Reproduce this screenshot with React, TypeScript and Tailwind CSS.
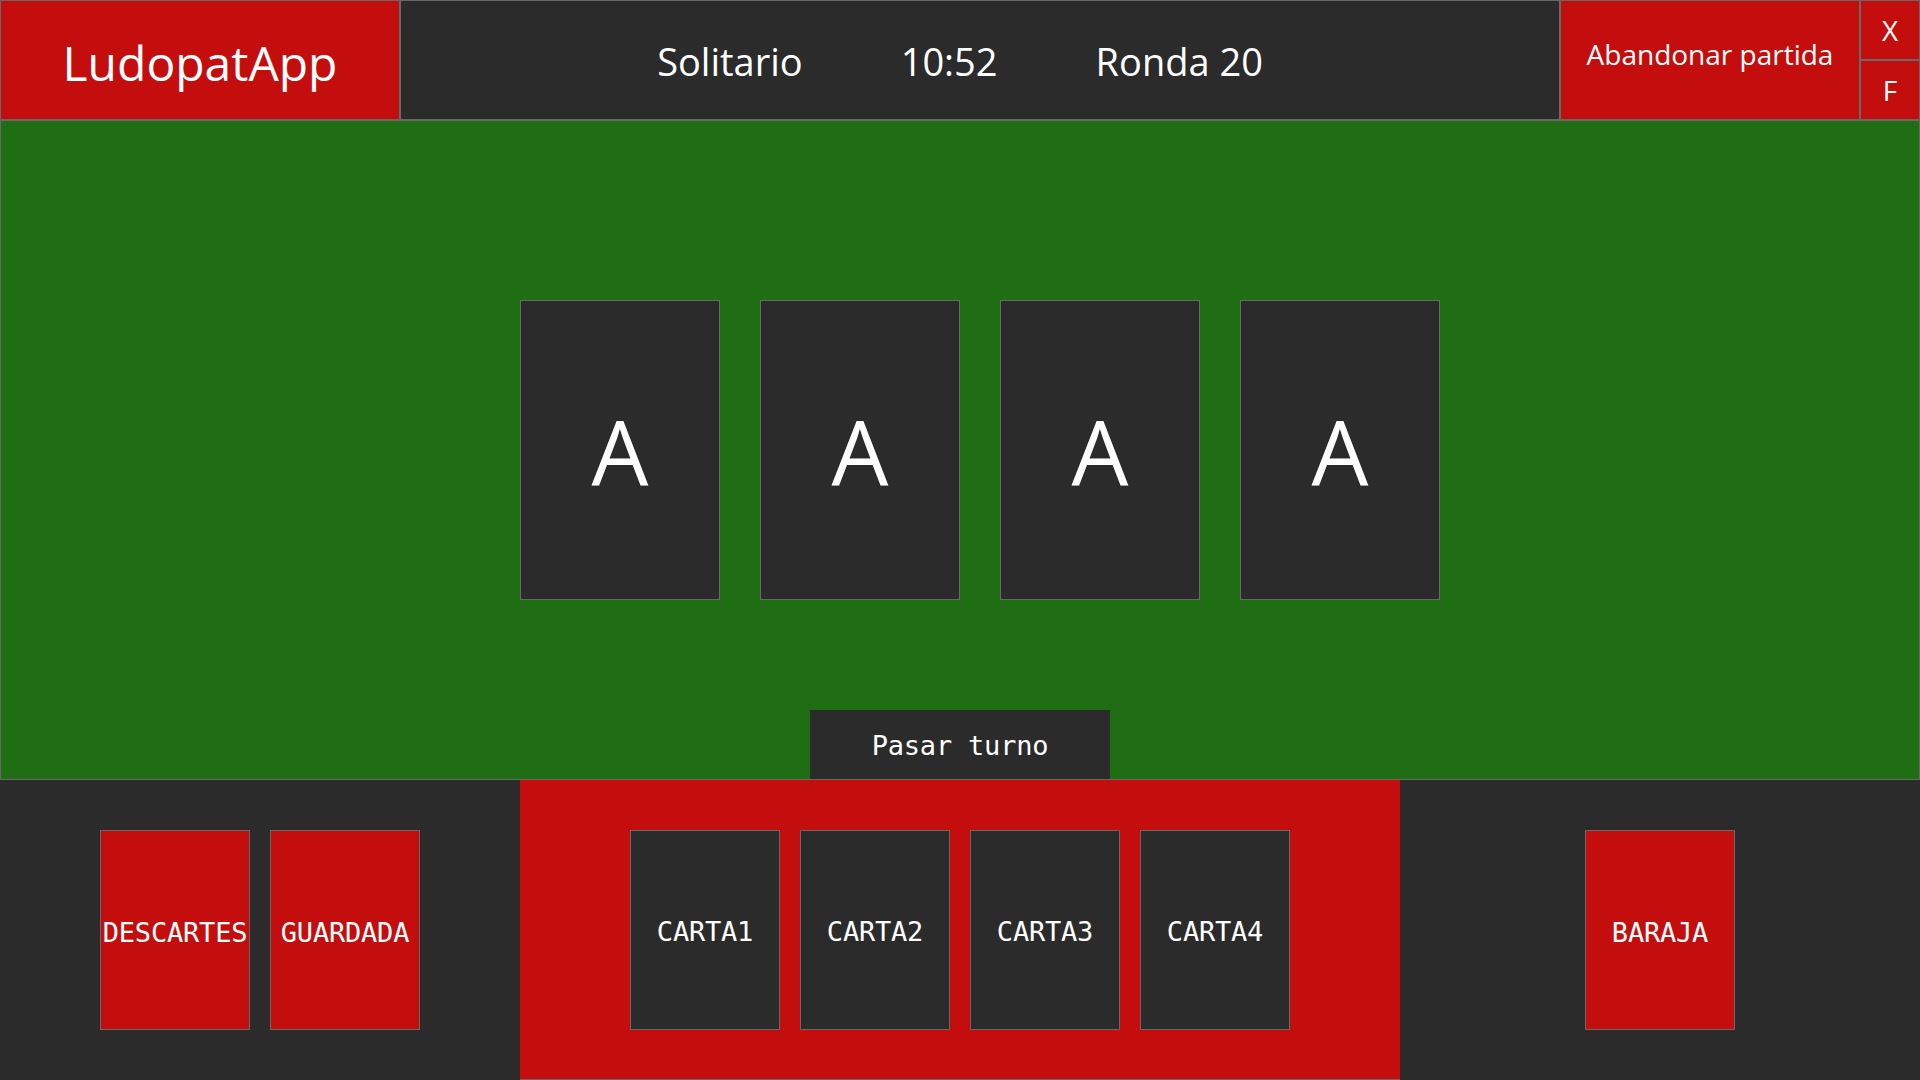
import React from "react";

const sans = "font-['Open_Sans','Noto_Sans',sans-serif]";
const mono = "font-['DejaVu_Sans_Mono','Liberation_Mono',monospace]";

function TableCard({ label }: { label: string }) {
  return (
    <div className="w-[200px] h-[300px] bg-[#2b2b2b] border border-[#686868] flex items-center justify-center">
      <span className={`${sans} text-white text-[90px] leading-none`}>{label}</span>
    </div>
  );
}

function SmallCard({ label, red }: { label: string; red?: boolean }) {
  return (
    <div
      className={`w-[150px] h-[200px] border border-[#686868] flex items-center justify-center ${
        red ? "bg-[#c40e0e]" : "bg-[#2b2b2b]"
      }`}
    >
      <span className={`${mono} text-white text-[27px] leading-none tracking-[-0.2px] pt-[4px]`}>{label}</span>
    </div>
  );
}

export default function App() {
  const hand = ["CARTA1", "CARTA2", "CARTA3", "CARTA4"];

  return (
    <div className="w-[1920px] h-[1080px] flex flex-col bg-[#2b2b2b] overflow-hidden">
      {/* barra superior */}
      <header className="h-[120px] flex shrink-0">
        <div className="w-[400px] bg-[#c40e0e] border border-[#686868] flex items-center justify-center">
          <span className={`${sans} text-white text-[48px] leading-none pt-[5px]`}>LudopatApp</span>
        </div>
        <div className="flex-1 bg-[#2b2b2b] border border-[#686868] flex items-center justify-center gap-[98px] pr-[40px]">
          <span className={`${sans} text-white text-[38px] leading-none pt-[2px]`}>Solitario</span>
          <span className={`${sans} text-white text-[38px] leading-none pt-[2px]`}>10:52</span>
          <span className={`${sans} text-white text-[38px] leading-none pt-[2px]`}>Ronda 20</span>
        </div>
        <button className="w-[300px] bg-[#c40e0e] border border-[#686868] flex items-center justify-center pb-3">
          <span className={`${sans} text-white text-[28px] leading-none`}>Abandonar partida</span>
        </button>
        <div className="w-[60px] flex flex-col">
          <button className={`h-[60px] bg-[#c40e0e] border border-[#686868] ${sans} text-white text-[28px] leading-none flex items-center justify-center`}>
            X
          </button>
          <button className={`h-[60px] bg-[#c40e0e] border border-[#686868] ${sans} text-white text-[28px] leading-none flex items-center justify-center`}>
            F
          </button>
        </div>
      </header>

      {/* mesa */}
      <main className="h-[660px] bg-[#206e14] border border-[#686868] flex flex-col shrink-0">
        <div className="flex gap-[40px] pl-[519px] pt-[179px]">
          {["A", "A", "A", "A"].map((c, i) => (
            <TableCard key={i} label={c} />
          ))}
        </div>
        <div className="mt-auto flex justify-center">
          <button className={`w-[300px] h-[69px] bg-[#2b2b2b] ${mono} text-white text-[27px] leading-none pt-[2px] tracking-[-0.2px]`}>
            Pasar turno
          </button>
        </div>
      </main>

      {/* zona del jugador */}
      <footer className="flex-1 flex">
        <div className="w-[520px] flex items-center justify-center gap-[20px]">
          <SmallCard label="DESCARTES" red />
          <SmallCard label="GUARDADA" red />
        </div>
        <div className="w-[880px] bg-[#c40e0e] border-b border-[#686868] flex items-center justify-center gap-[20px]">
          {hand.map((c) => (
            <SmallCard key={c} label={c} />
          ))}
        </div>
        <div className="flex-1 flex items-center justify-center">
          <SmallCard label="BARAJA" red />
        </div>
      </footer>
    </div>
  );
}
